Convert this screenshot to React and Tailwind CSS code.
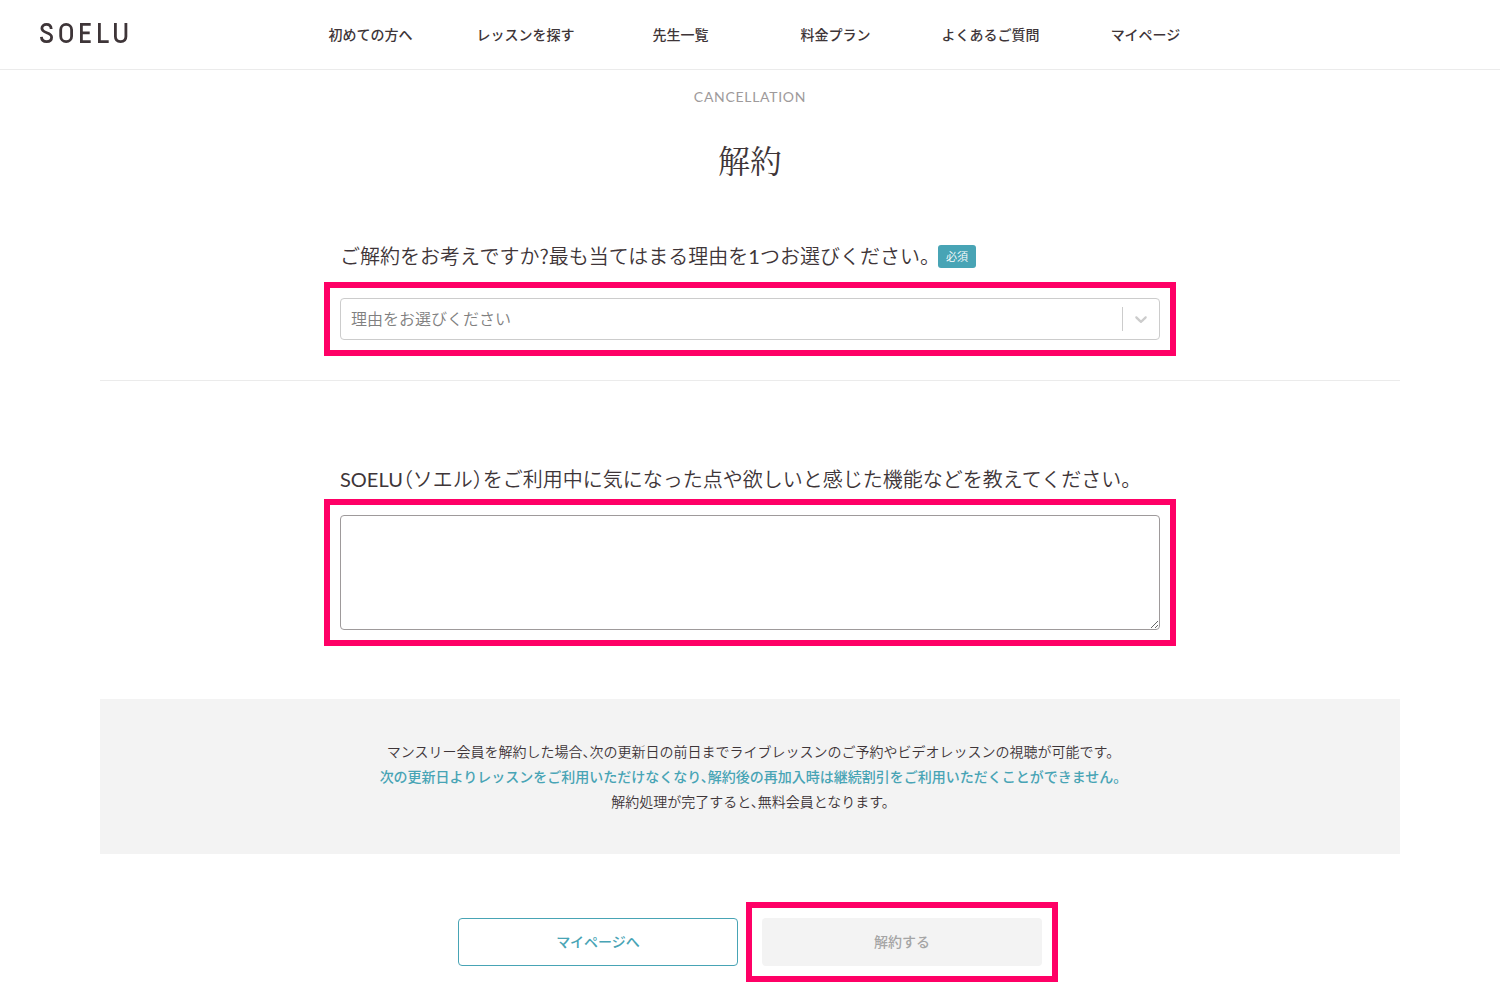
const navItems = [
  "初めての方へ",
  "レッスンを探す",
  "先生一覧",
  "料金プラン",
  "よくあるご質問",
  "マイページ",
];

function Logo() {
  return (
    <svg viewBox="0 0 88 20" className="h-5 w-[88px]" fill="none" stroke="currentColor" strokeWidth="2.8" role="img" aria-label="SOELU">
      <path d="M11.2 6C11 3 9.200 1.400 6.500 1.400S1.900 3 1.900 5.300C1.900 10.800 11.600 8.600 11.600 14.200c0 2.700-2 4.400-5 4.400s-5-1.600-5.200-4.800" />
      <rect x="20.700" y="1.400" width="10.900" height="17.200" rx="5.400" />
      <path d="M50.700 1.400h-9.300v17.200h9.300M41.400 9.800h8.300M59.400 0v18.600h9.300M75.400 0v13.600c0 3.300 1.900 5 5.200 5s5.300-1.700 5.300-5V0" />
    </svg>
  );
}

function Highlight({ className = "", children }) {
  return <div className={`border-6 border-[#ff0066] p-2.5 ${className}`}>{children}</div>;
}

export default function App() {
  return (
    <div className="min-h-screen bg-white font-['Lato','Noto_Sans_CJK_JP',sans-serif] text-[#3e3538] [font-feature-settings:'halt']">
      <header className="flex h-[70px] items-center border-b border-[#ebebeb] px-10">
        <a href="#top" className="w-[253px] pb-1"><Logo /></a>
        <nav className="grid max-w-[930px] flex-1 grid-cols-6">
          {navItems.map((label) => (
            <a key={label} href="#nav" className="text-center text-sm font-medium">{label}</a>
          ))}
        </nav>
      </header>

      <main className="mx-auto max-w-[1300px] pb-4">
        <p className="pt-4 text-center text-sm leading-[22px] tracking-wider text-[#9e9a9b]">CANCELLATION</p>
        <h1 className="mt-[26px] text-center font-['Noto_Serif_CJK_JP','Noto_Sans_CJK_JP',serif] text-[32px] leading-[50px] font-normal">解約</h1>

        <section className="border-b border-[#ebebeb] pt-14 pb-6">
          <div className="mx-auto max-w-[852px]">
            <div className="flex items-center gap-2 px-4">
              <label htmlFor="reason" className="text-xl leading-8 font-[350]">ご解約をお考えですか<span className="font-['Noto_Sans_CJK_JP',sans-serif]">?</span>最も当てはまる理由を<span className="font-normal">1</span>つお選びください。</label>
              <span className="rounded-[3px] bg-[#48a4b5] px-2 text-[11px] leading-[23px] font-[350] text-white">必須</span>
            </div>
            <Highlight className="mt-2.5">
              <div className="relative">
                <select id="reason" className="block h-[42px] w-full appearance-none rounded border border-[#ccc] bg-white pr-12 pl-2.5 text-base font-[350] text-[#808080]">
                  <option>理由をお選びください</option>
                </select>
                <span className="pointer-events-none absolute inset-y-0 right-0 flex w-[38px] items-center">
                  <span className="h-6 w-px bg-[#ccc]" />
                  <svg viewBox="0 0 20 20" className="ml-2 size-5" fill="#ccc" aria-hidden="true">
                    <path d="M4.516 7.548c0.436-0.446 1.043-0.481 1.576 0l3.908 3.747 3.908-3.747c0.533-0.481 1.141-0.446 1.574 0 0.436 0.445 0.408 1.197 0 1.615-0.406 0.418-4.695 4.502-4.695 4.502-0.217 0.223-0.502 0.335-0.787 0.335s-0.570-0.112-0.789-0.335c0 0-4.287-4.084-4.695-4.502s-0.436-1.170 0-1.615z" />
                  </svg>
                </span>
              </div>
            </Highlight>
          </div>
        </section>

        <section className="mx-auto max-w-[852px] pt-[82px]">
          <label htmlFor="feedback" className="block px-4 text-xl leading-8 font-[350]"><span className="font-normal">SOELU</span>（ソエル）をご利用中に気になった点や欲しいと感じた機能などを教えてください。</label>
          <Highlight className="mt-1">
            <textarea id="feedback" className="block h-[115px] w-full resize rounded border border-[#9e9a9b] bg-white p-2.5 text-base" />
          </Highlight>
        </section>

        <section className="mt-[53px] bg-[#f3f3f3] py-10 text-center text-sm leading-[25px] font-[350]">
          <p>マンスリー会員を解約した場合、次の更新日の前日までライブレッスンのご予約やビデオレッスンの視聴が可能です。</p>
          <p className="font-medium text-[#48a4b5]">次の更新日よりレッスンをご利用いただけなくなり、解約後の再加入時は継続割引をご利用いただくことができません。</p>
          <p>解約処理が完了すると、無料会員となります。</p>
        </section>

        <div className="mt-12 flex items-center justify-center gap-2 pl-4">
          <button type="button" className="h-12 w-[280px] rounded border border-[#48a4b5] bg-white text-sm font-medium text-[#48a4b5]">マイページへ</button>
          <Highlight>
            <button type="button" disabled className="block h-12 w-[280px] rounded bg-[#f3f3f3] text-sm font-medium text-[#a5a5a5]">解約する</button>
          </Highlight>
        </div>
      </main>
    </div>
  );
}
